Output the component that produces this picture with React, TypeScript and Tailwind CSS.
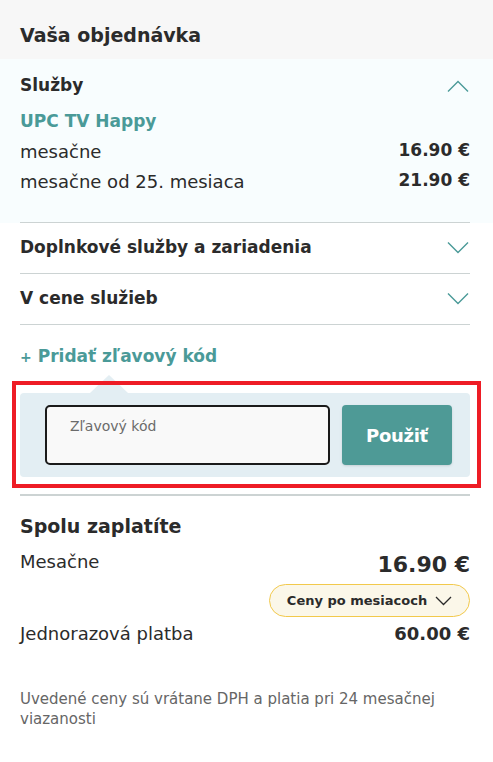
import React from 'react'

const Chevron = ({ up = false, className = '' }: { up?: boolean; className?: string }) => (
  <svg width="22" height="12" viewBox="0 0 22 12" className={className} fill="none">
    <path
      d={up ? 'M1 11.5 L11 1.5 L21 11.5' : 'M1 0.5 L11 10.5 L21 0.5'}
      stroke="currentColor"
      strokeWidth="1.4"
    />
  </svg>
)

const App: React.FC = () => {
  return (
    <div className="w-[493px] min-h-[762px] bg-white font-['DejaVu_Sans',sans-serif] text-[#2b2b2b]">
      {/* hlavička */}
      <div className="h-[59px] bg-[#f7f7f7] px-5 flex items-center pt-[12px]">
        <h1 className="text-[19px] font-bold">Vaša objednávka</h1>
      </div>

      {/* služby */}
      <div className="bg-[#f8fdfe]">
        <div className="ml-5 mr-[23px] pt-[15px] pb-[29px] border-b border-[#ccd3d3]">
          <div className="h-6 flex items-center justify-between">
            <span className="text-[17px] font-bold">Služby</span>
            <Chevron up className="text-[#4a9a98] mr-[1px]" />
          </div>
          <div className="mt-3 h-6 flex items-center text-[17px] font-bold text-[#4a9a98]">
            UPC TV Happy
          </div>
          <div className="mt-[5px] h-6 flex items-center justify-between text-[18px]">
            <span>mesačne</span>
            <span className="text-[17px] font-bold">16.90 €</span>
          </div>
          <div className="mt-[6px] h-6 flex items-center justify-between text-[18px]">
            <span>mesačne od 25. mesiaca</span>
            <span className="text-[17px] font-bold">21.90 €</span>
          </div>
        </div>
      </div>

      <div className="ml-5 mr-[23px]">
        <div className="h-[51px] flex items-center justify-between border-b border-[#ccd3d3]">
          <span className="text-[17px] font-bold">Doplnkové služby a zariadenia</span>
          <Chevron className="text-[#4a9a98] mr-[1px]" />
        </div>
        <div className="h-[51px] flex items-center justify-between border-b border-[#ccd3d3]">
          <span className="text-[17px] font-bold">V cene služieb</span>
          <Chevron className="text-[#4a9a98] mr-[1px]" />
        </div>

        {/* zľavový kód */}
        <div className="mt-5 h-6 flex items-center text-[17px] font-bold text-[#4a9a98]">
          <span className="text-[14px] mr-[6px]">+</span>Pridať zľavový kód
        </div>

        <div className="relative mt-6">
          <div className="absolute left-[70px] -top-[18px] w-0 h-0 border-l-[19px] border-r-[19px] border-b-[18px] border-l-transparent border-r-transparent border-b-[#e3eef3]" />
          <div className="rounded-[4px] bg-[#e3eef3] pl-[25px] pr-[18px] py-3 flex gap-3">
            <div className="w-[285px] h-[60px] rounded-[5px] border-2 border-[#1a1a1a] bg-[#f9f9f9] pl-[23px] pt-[7px]">
              <span className="text-[14px] text-[#6b6b6b]">Zľavový kód</span>
            </div>
            <button className="w-[110px] h-[60px] rounded-[4px] bg-[#4e9a96] text-white text-[18px] font-bold tracking-[-0.3px] shadow-sm">
              Použiť
            </button>
          </div>
          <div className="absolute -left-2 -right-[11px] -top-3 -bottom-[11px] border-4 border-[#ee1c25] pointer-events-none" />
        </div>

        <div className="mt-[17px] border-t-2 border-[#ccd3d3]" />

        {/* spolu */}
        <div className="mt-[16px] h-7 flex items-center text-[19px] font-bold">
          Spolu zaplatíte
        </div>
        <div className="mt-[11px] flex items-start justify-between">
          <span className="text-[18px] leading-[24px] -mt-[1px]">Mesačne</span>
          <span className="text-[22px] font-bold leading-[28px]">16.90 €</span>
        </div>
        <div className="mt-[5px] flex justify-end">
          <button className="h-[33px] w-[201px] rounded-full border-[1.5px] border-[#f2c94c] bg-[#fbf7e9] flex items-center justify-center gap-2 text-[13px] font-bold">
            Ceny po mesiacoch
            <svg width="17" height="10" viewBox="0 0 17 10" fill="none">
              <path d="M1 1 L8.5 8.5 L16 1" stroke="#2b2b2b" strokeWidth="1.3" />
            </svg>
          </button>
        </div>
        <div className="mt-[4px] h-6 flex items-center justify-between">
          <span className="text-[18px]">Jednorazová platba</span>
          <span className="text-[18px] font-bold">60.00 €</span>
        </div>

        <p className="mt-[44px] text-[15px] leading-[20px] text-[#666]">
          Uvedené ceny sú vrátane DPH a platia pri 24 mesačnej viazanosti
        </p>
      </div>
    </div>
  )
}

export default App
